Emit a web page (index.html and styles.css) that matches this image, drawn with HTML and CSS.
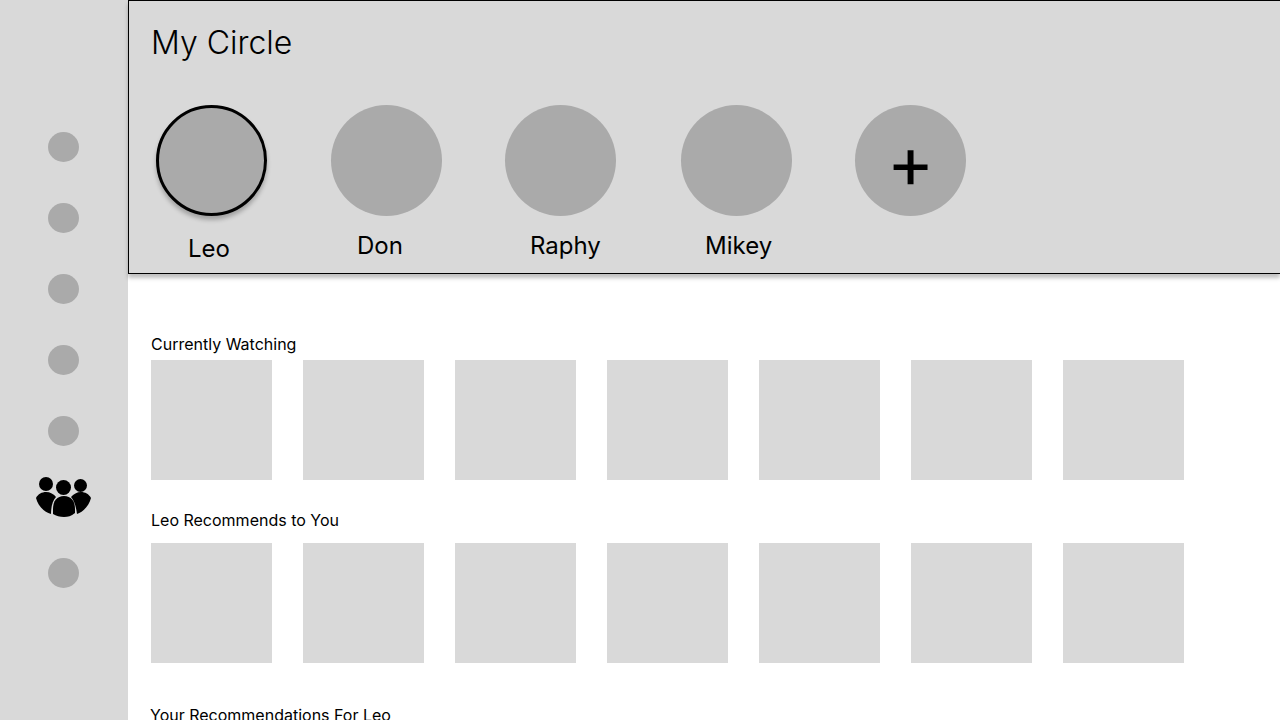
FILE: index.html
```html
<!DOCTYPE html>
<html>
	<head>
		<meta charset="utf-8">
		<title>My Circle</title>
		<link rel="stylesheet" href="styles.css">
	</head>
	<body>
		<div class="page">
			<div class="sidebar">
				<div class="dot"></div>
				<div class="dot"></div>
				<div class="dot"></div>
				<div class="dot"></div>
				<div class="dot"></div>
				<svg class="circle-icon" viewBox="0 0 55 41" width="55" height="41">
					<circle cx="10" cy="8" r="7"/>
					<circle cx="27.5" cy="11.5" r="7.5"/>
					<circle cx="44.5" cy="9.5" r="6.5"/>
					<path d="M0 22C2 18 6 16 10 16C14 16 18 18 20 21C17 24 15 30 15 38C8 36 2 30 0 22Z"/>
					<path d="M28 20C35 20 39 25 39 33L39 37C35 40 32 41 28 41C24 41 20 40 17 38L17 33C17 25 21 20 28 20Z"/>
					<path d="M55 22C53 18 49 16 45 16C41 16 37.5 18 35 21C38 24 40 30 41 38C47 36 53 30 55 22Z"/>
				</svg>
				<div class="dot last"></div>
			</div>
			<div class="main">
				<div class="circle-panel">
					<h1 class="title">My Circle</h1>
					<ul class="members">
						<li class="member leo">
							<div class="avatar selected"></div>
							<span class="name">Leo</span>
						</li>
						<li class="member don">
							<div class="avatar"></div>
							<span class="name">Don</span>
						</li>
						<li class="member raphy">
							<div class="avatar"></div>
							<span class="name">Raphy</span>
						</li>
						<li class="member mikey">
							<div class="avatar"></div>
							<span class="name">Mikey</span>
						</li>
						<li class="member add">
							<div class="avatar plus">+</div>
						</li>
					</ul>
				</div>
				<div class="content">
					<h2 class="row-title">Currently Watching</h2>
					<div class="row">
						<div class="tile"></div>
						<div class="tile"></div>
						<div class="tile"></div>
						<div class="tile"></div>
						<div class="tile"></div>
						<div class="tile"></div>
						<div class="tile"></div>
					</div>
					<h2 class="row-title second">Leo Recommends to You</h2>
					<div class="row">
						<div class="tile"></div>
						<div class="tile"></div>
						<div class="tile"></div>
						<div class="tile"></div>
						<div class="tile"></div>
						<div class="tile"></div>
						<div class="tile"></div>
					</div>
					<h2 class="row-title third">Your Recommendations For Leo</h2>
				</div>
			</div>
		</div>
	</body>
</html>
```

FILE: styles.css
```css
*{
	margin:0;
	padding:0;
	box-sizing:border-box;
}
ul{
	list-style:none;
}
body{
	font-family:Inter,"Liberation Sans",sans-serif;
	color:#000;
	background-color:#fff;
	overflow:hidden;
}
.page{
	display:flex;
	width:1280px;
	height:720px;
	overflow:hidden;
}
.sidebar{
	width:128px;
	flex-shrink:0;
	background-color:#d9d9d9;
	display:flex;
	flex-direction:column;
	align-items:center;
	padding:132px 1px 0 0;
}
.dot{
	width:31px;
	height:30px;
	border-radius:50%;
	background-color:#aaa;
	margin-bottom:41px;
}
.dot:nth-child(5){
	margin-bottom:30px;
}
.circle-icon{
	display:block;
	flex-shrink:0;
	margin-bottom:41px;
}
.main{
	flex:1;
	min-width:0;
}
.circle-panel{
	height:274px;
	background-color:#d9d9d9;
	border:1px solid #000;
	border-right:none;
	box-shadow:0 4px 4px rgba(0,0,0,.25);
	padding:22px 0 0 22px;
}
.title{
	font-size:32px;
	font-weight:300;
	line-height:40px;
}
.members{
	display:flex;
	margin-top:42px;
}
.member{
	width:111px;
	flex-shrink:0;
}
.leo{
	margin-left:5px;
}
.don{
	margin-left:64px;
}
.raphy{
	margin-left:63px;
}
.mikey{
	margin-left:65px;
}
.add{
	margin-left:63px;
}
.avatar{
	width:111px;
	height:111px;
	border-radius:50%;
	background-color:#aaa;
}
.selected{
	border:3px solid #000;
	box-shadow:0 4px 4px rgba(0,0,0,.25);
}
.plus{
	display:flex;
	align-items:center;
	justify-content:center;
	font-size:72px;
	font-weight:400;
	line-height:77px;
	padding-top:1px;
}
.name{
	display:block;
	font-size:24px;
	font-weight:400;
	line-height:29px;
	margin-top:15px;
}
.leo .name{
	margin-left:32px;
	margin-top:18px;
}
.don .name{
	margin-left:26px;
}
.raphy .name{
	margin-left:25px;
}
.mikey .name{
	margin-left:24px;
}
.content{
	padding:61px 0 0 23px;
}
.row-title{
	font-size:16px;
	font-weight:400;
	line-height:19px;
}
.second{
	margin-top:31px;
}
.third{
	margin:43px 0 0 -1px;
}
.row{
	display:flex;
	gap:31px;
	margin-top:6px;
}
.second + .row{
	margin-top:13px;
}
.tile{
	width:121px;
	height:120px;
	background-color:#d9d9d9;
}
```
